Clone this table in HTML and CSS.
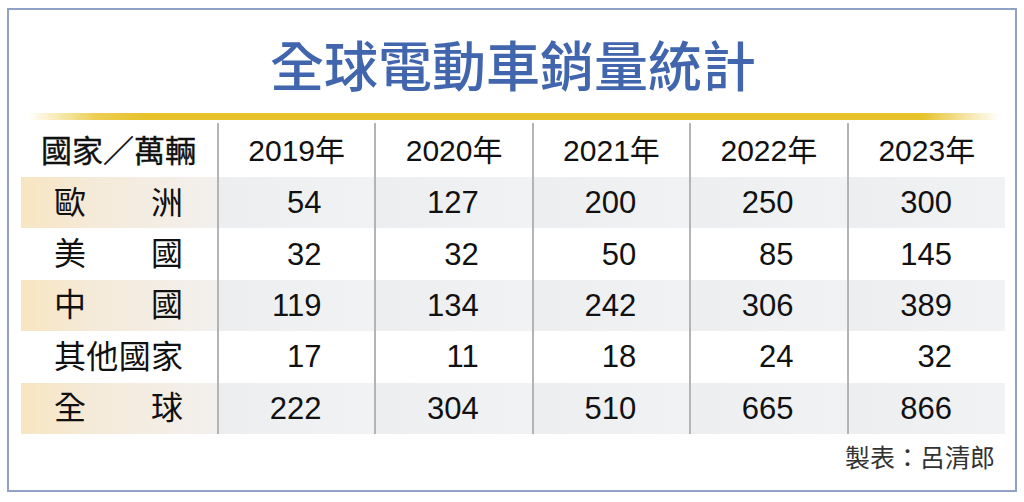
FILE: index.html
```html
<!DOCTYPE html>
<html lang="zh-Hant">
<head>
<meta charset="utf-8">
<title>全球電動車銷量統計</title>
<link rel="stylesheet" href="styles.css">
</head>
<body>
<div class="frame">
  <h1 class="title">全球電動車銷量統計</h1>
  <div class="rule"></div>
  <table class="stats">
    <thead>
      <tr class="head">
        <th class="label-head">國家／萬輛</th>
        <th>2019年</th>
        <th>2020年</th>
        <th>2021年</th>
        <th>2022年</th>
        <th>2023年</th>
      </tr>
    </thead>
    <tbody>
      <tr class="shade">
        <td class="label"><span class="spread"><span>歐</span><span>洲</span></span></td>
        <td>54</td><td>127</td><td>200</td><td>250</td><td>300</td>
      </tr>
      <tr>
        <td class="label"><span class="spread"><span>美</span><span>國</span></span></td>
        <td>32</td><td>32</td><td>50</td><td>85</td><td>145</td>
      </tr>
      <tr class="shade">
        <td class="label"><span class="spread"><span>中</span><span>國</span></span></td>
        <td>119</td><td>134</td><td>242</td><td>306</td><td>389</td>
      </tr>
      <tr>
        <td class="label"><span class="spread"><span>其</span><span>他</span><span>國</span><span>家</span></span></td>
        <td>17</td><td>11</td><td>18</td><td>24</td><td>32</td>
      </tr>
      <tr class="shade">
        <td class="label"><span class="spread"><span>全</span><span>球</span></span></td>
        <td>222</td><td>304</td><td>510</td><td>665</td><td>866</td>
      </tr>
    </tbody>
  </table>
  <div class="credit">製表：呂清郎</div>
</div>
</body>
</html>
```
FILE: styles.css
```css
* { box-sizing: border-box; }
html, body {
  margin: 0;
  padding: 0;
  background: #ffffff;
}
body {
  font-family: "Liberation Sans", "Noto Sans CJK TC", sans-serif;
  color: #111111;
}
.frame {
  margin: 8px 0 0 7px;
  width: 1010px;
  height: 484px;
  border: 2px solid #8fa2c6;
  padding: 0 10px 0 12px;
  background: #ffffff;
}
.title {
  margin: 0;
  height: 103px;
  padding-top: 4px;
  display: flex;
  align-items: center;
  justify-content: center;
  font-family: "Noto Sans CJK TC", sans-serif;
  font-size: 54px;
  line-height: 1;
  font-weight: 500;
  color: #4166ad;
  letter-spacing: 0;
}
.rule {
  height: 7px;
  margin: 0 6px 0 7px;
  background: linear-gradient(to right,
    rgba(232, 194, 40, 0) 0%,
    rgba(232, 194, 40, 0.8) 7%,
    #e7c22a 12%,
    #e7c22a 92%,
    rgba(232, 194, 40, 0) 100%);
}
.stats {
  margin-top: 3px;
  width: 984px;
  border-collapse: collapse;
  table-layout: fixed;
}
.stats th,
.stats td {
  padding: 0;
  font-weight: 400;
  font-size: 30px;
  line-height: 1;
  border-left: 2px solid #b4b4b4;
}
.stats th:first-child,
.stats td:first-child {
  border-left: none;
  width: 197px;
}
.stats .head { height: 54px; }
.stats .head th {
  text-align: center;
  vertical-align: middle;
  padding-top: 2px;
}
.stats .head .label-head {
  font-size: 31px;
  font-weight: 400;
  text-align: left;
  padding-left: 20px;
  -webkit-text-stroke: 0.4px #111111;
}
.stats tbody tr { height: 51.4px; }
.stats tbody td {
  text-align: right;
  padding-right: 53px;
  vertical-align: middle;
  font-size: 31px;
}
.stats tbody td.label {
  text-align: left;
  padding-left: 33px;
  padding-right: 0;
  font-size: 32px;
}
.spread {
  display: flex;
  justify-content: space-between;
  width: 129px;
}
.stats .shade td {
  background: linear-gradient(to right, #eceef0, #f1f2f4);
}
.stats .shade td.label {
  background: linear-gradient(to right, #f8e5c2 0%, #f5ead8 35%, #f2f0ee 100%);
}
.credit {
  margin-top: 9px;
  text-align: right;
  padding-right: 10px;
  font-size: 25px;
  line-height: 30px;
  color: #333333;
}
```
